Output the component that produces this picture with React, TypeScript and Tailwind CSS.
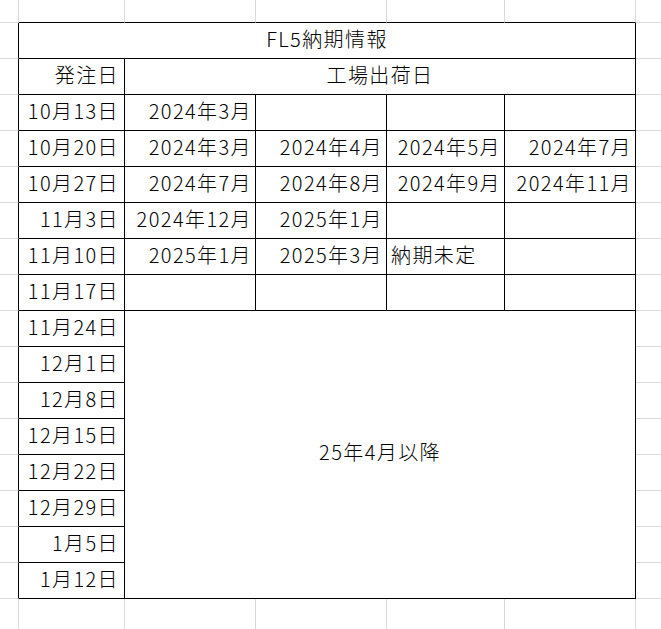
const grid = 'border-[#dadada]'

type Cell = { text?: string; align?: 'right' | 'left' | 'center' }

const rows: { date: string; cells: Cell[] }[] = [
  { date: '10月13日', cells: [{ text: '2024年3月' }, {}, {}, {}] },
  {
    date: '10月20日',
    cells: [{ text: '2024年3月' }, { text: '2024年4月' }, { text: '2024年5月' }, { text: '2024年7月' }],
  },
  {
    date: '10月27日',
    cells: [{ text: '2024年7月' }, { text: '2024年8月' }, { text: '2024年9月' }, { text: '2024年11月' }],
  },
  { date: '11月3日', cells: [{ text: '2024年12月' }, { text: '2025年1月' }, {}, {}] },
  {
    date: '11月10日',
    cells: [{ text: '2025年1月' }, { text: '2025年3月' }, { text: '納期未定', align: 'left' }, {}],
  },
  { date: '11月17日', cells: [{}, {}, {}, {}] },
]

const later = ['11月24日', '12月1日', '12月8日', '12月15日', '12月22日', '12月29日', '1月5日', '1月12日']

function Edge() {
  return <div className="border-r border-b border-r-black border-b-[#dadada]" />
}

function Tail() {
  return <div className={`border-b ${grid}`} />
}

function DateCell({ text }: { text: string }) {
  return (
    <div className="flex items-center justify-end whitespace-nowrap border-r border-b border-black pr-[5px] pb-[3px]">
      {text}
    </div>
  )
}

function DataCell({ text, align = 'right' }: Cell) {
  const pos = align === 'left' ? 'justify-start pl-1' : 'justify-end pr-[3px]'
  return (
    <div className={`flex items-center whitespace-nowrap border-r border-b border-black pb-[3px] ${pos}`}>
      {text}
    </div>
  )
}

export default function App() {
  return (
    <div
      className="grid h-[629px] w-[661px] grid-cols-[19px_106px_131px_131px_118px_131px_1fr] grid-rows-[23px_repeat(16,36px)_1fr] overflow-hidden bg-white text-[20px] font-light leading-none tracking-[1.4px] text-black"
      style={{ fontFamily: '"Noto Sans CJK JP", "Noto Sans", sans-serif' }}
    >
      {/* row above the table */}
      <div className={`border-r border-b ${grid}`} />
      <div className="border-r border-b border-r-[#dadada] border-b-black" />
      <div className="border-r border-b border-r-[#dadada] border-b-black" />
      <div className="border-r border-b border-r-[#dadada] border-b-black" />
      <div className="border-r border-b border-r-[#dadada] border-b-black" />
      <div className="border-r border-b border-r-[#dadada] border-b-black" />
      <div className={`border-b ${grid}`} />

      {/* title */}
      <Edge />
      <div className="col-span-5 flex items-center justify-center border-r border-b border-black pb-[3px]">
        FL5納期情報
      </div>
      <Tail />

      {/* header */}
      <Edge />
      <DateCell text="発注日" />
      <div className="col-span-4 flex items-center justify-center border-r border-b border-black pb-[3px]">
        工場出荷日
      </div>
      <Tail />

      {rows.map((r) => (
        <>
          <Edge key={r.date + 'e'} />
          <DateCell key={r.date} text={r.date} />
          {r.cells.map((c, i) => (
            <DataCell key={r.date + i} {...c} />
          ))}
          <Tail key={r.date + 't'} />
        </>
      ))}

      {later.map((d, i) => (
        <>
          <Edge key={d + 'e'} />
          <DateCell key={d} text={d} />
          {i === 0 && (
            <div className="col-span-4 row-span-8 flex items-center justify-center border-r border-b border-black pb-[6px]">
              25年4月以降
            </div>
          )}
          <Tail key={d + 't'} />
        </>
      ))}

      {/* row below the table */}
      <div className={`border-r ${grid}`} />
      <div className={`border-r ${grid}`} />
      <div className={`border-r ${grid}`} />
      <div className={`border-r ${grid}`} />
      <div className={`border-r ${grid}`} />
      <div className={`border-r ${grid}`} />
      <div />
    </div>
  )
}
